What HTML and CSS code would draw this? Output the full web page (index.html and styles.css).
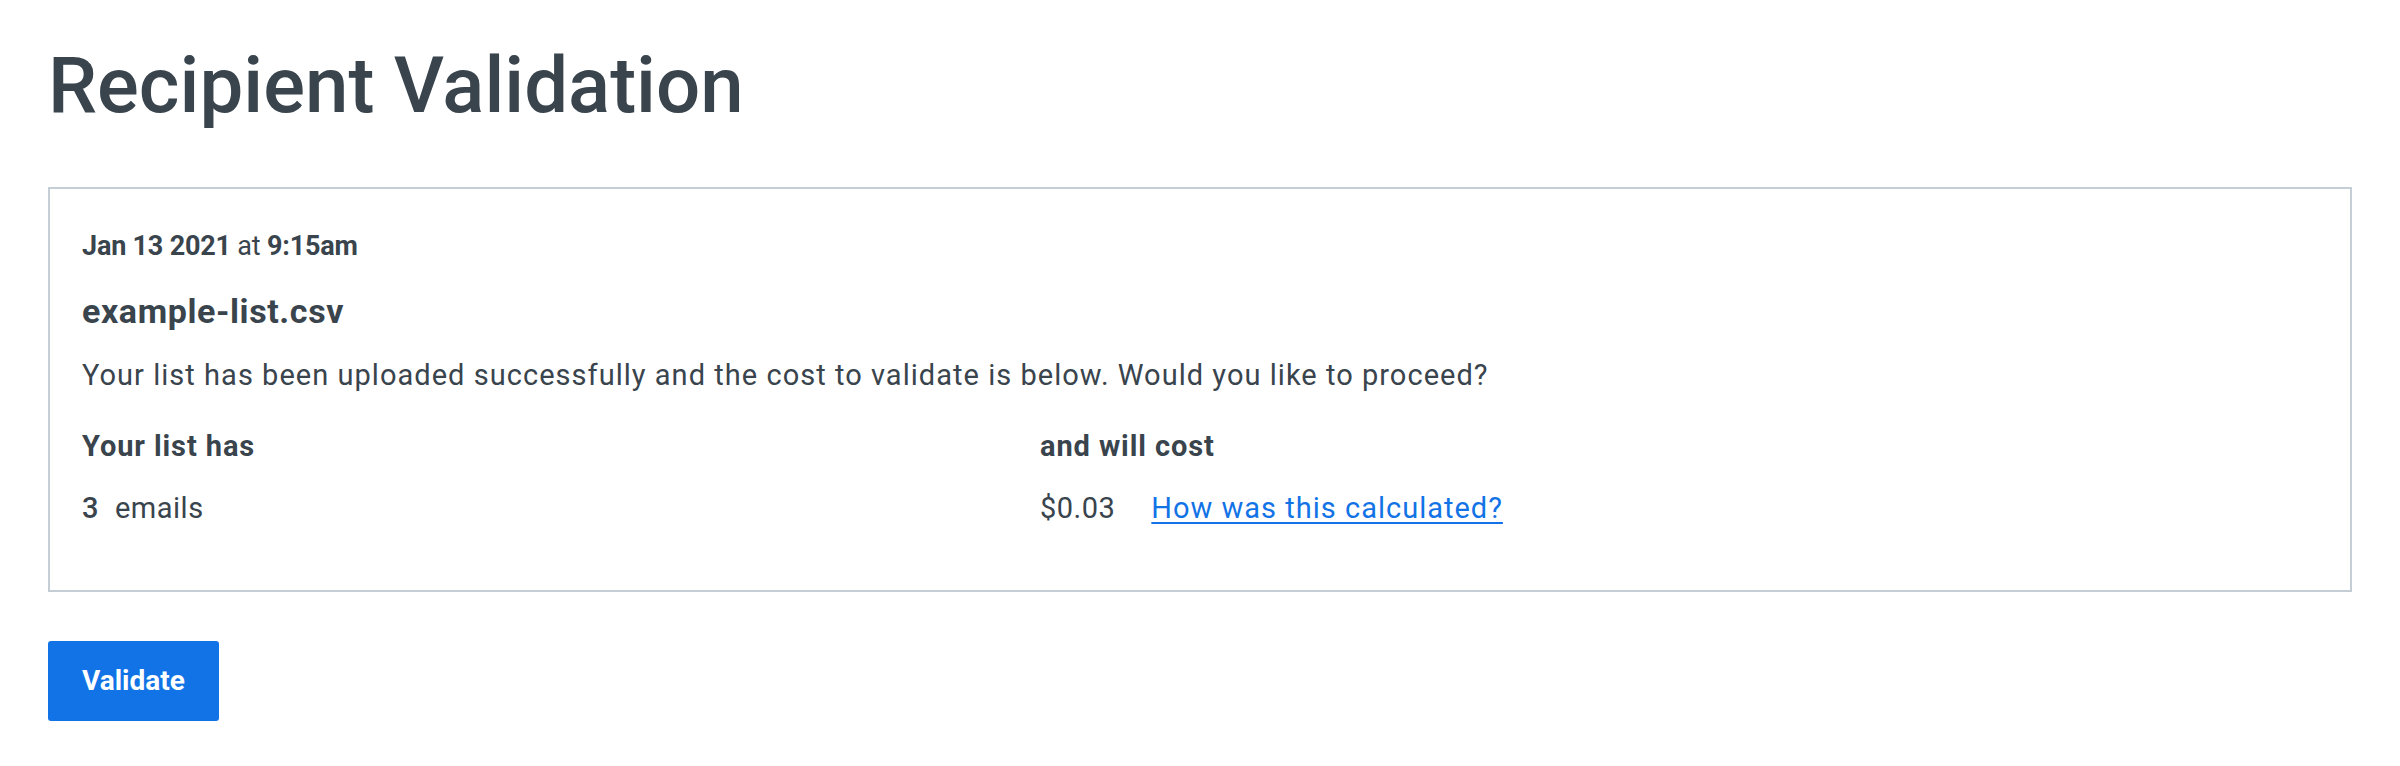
FILE: index.html
```html
<!DOCTYPE html>
<html lang="en">
<head>
<meta charset="utf-8">
<title>Recipient Validation</title>
<link rel="stylesheet" href="styles.css">
</head>
<body>
<main class="page">
  <h1 class="page-title">Recipient Validation</h1>
  <section class="card">
    <p class="card-date"><strong>Jan 13 2021</strong> at <strong>9:15am</strong></p>
    <h2 class="card-file">example-list.csv</h2>
    <p class="card-text">Your list has been uploaded successfully and the cost to validate is below. Would you like to proceed?</p>
    <div class="summary">
      <div class="summary-col">
        <div class="summary-label">Your list has</div>
        <div class="summary-value"><span class="count">3</span><span class="unit">emails</span></div>
      </div>
      <div class="summary-col">
        <div class="summary-label">and will cost</div>
        <div class="summary-value"><span class="price">$0.03</span><a class="summary-link" href="#">How was this calculated?</a></div>
      </div>
    </div>
  </section>
  <button class="btn-primary" type="button">Validate</button>
</main>
</body>
</html>
```

FILE: styles.css
```css
html, body {
  margin: 0;
  padding: 0;
  background: #ffffff;
}

body {
  font-family: Roboto, "Liberation Sans", Arial, sans-serif;
  color: #39444d;
}

.page {
  padding: 47px 48px 40px 48px;
}

.page-title {
  margin: 0 0 62px 0;
  font-size: 78px;
  line-height: 78px;
  font-weight: 500;
  color: #39444d;
}

.card {
  border: 2px solid #c5ced7;
  padding: 39px 32px 62px 32px;
}

.card-date {
  margin: 0;
  font-size: 27px;
  line-height: 36px;
  font-weight: 400;
  letter-spacing: -0.2px;
}

.card-date strong {
  font-weight: 700;
}

.card-file {
  margin: 27px 0 0 0;
  font-size: 34px;
  line-height: 40px;
  font-weight: 700;
  letter-spacing: 0.6px;
}

.card-text {
  margin: 24px 0 0 0;
  font-size: 29px;
  line-height: 40px;
  font-weight: 400;
  letter-spacing: 1.03px;
}

.summary {
  display: grid;
  grid-template-columns: 958px 1fr;
  margin-top: 31px;
}

.summary-label {
  font-size: 29px;
  line-height: 40px;
  font-weight: 700;
  letter-spacing: 0.9px;
}

.summary-value {
  margin-top: 22px;
  font-size: 29px;
  line-height: 40px;
  display: flex;
  align-items: baseline;
  letter-spacing: 0.5px;
}

.count {
  font-weight: 500;
}

.unit {
  margin-left: 16px;
}

.summary-link {
  margin-left: 36px;
  color: #1273e6;
  letter-spacing: 1px;
  text-decoration: underline;
  text-decoration-thickness: 2px;
  text-underline-offset: 4px;
}

.btn-primary {
  margin-top: 49px;
  display: block;
  height: 80px;
  padding: 0 34px;
  border: 0;
  border-radius: 3px;
  background: #1273e6;
  color: #ffffff;
  font-family: Roboto, "Liberation Sans", Arial, sans-serif;
  font-size: 28px;
  line-height: 80px;
  font-weight: 700;
  cursor: pointer;
}
```
